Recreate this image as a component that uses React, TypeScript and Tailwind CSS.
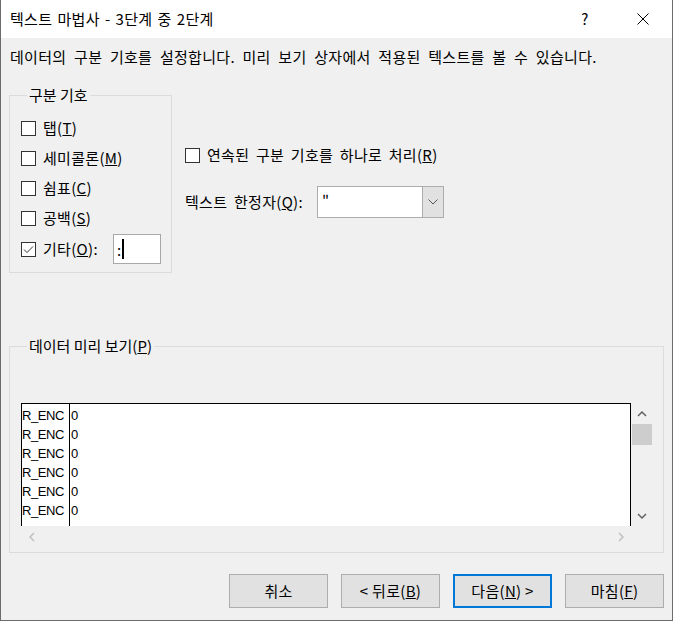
import React from "react";

function CheckBox({ checked = false }: { checked?: boolean }) {
  return (
    <span className="w-[15px] h-[15px] border border-[#333333] bg-white flex items-center justify-center shrink-0">
      {checked && (
        <svg width="13" height="13" viewBox="0 0 13 13">
          <path d="M2 6.5 L5 9.5 L11 3.5" fill="none" stroke="#333333" strokeWidth="1" />
        </svg>
      )}
    </span>
  );
}

function Label({ text, hot, tail = "" }: { text: string; hot: string; tail?: string }) {
  return (
    <span>
      {text}(<u>{hot}</u>){tail}
    </span>
  );
}

function Chevron({ dir, color }: { dir: "up" | "down" | "left" | "right"; color: string }) {
  const paths: Record<string, string> = {
    up: "M1 6 L5 2 L9 6",
    down: "M1 2 L5 6 L9 2",
    left: "M6 1 L2 5 L6 9",
    right: "M2 1 L6 5 L2 9",
  };
  const horiz = dir === "up" || dir === "down";
  return (
    <svg width={horiz ? 10 : 8} height={horiz ? 8 : 10} viewBox={horiz ? "0 0 10 8" : "0 0 8 10"}>
      <path d={paths[dir]} fill="none" stroke={color} strokeWidth="1.5" />
    </svg>
  );
}

const rows = ["R_ENC", "R_ENC", "R_ENC", "R_ENC", "R_ENC", "R_ENC"];

export default function App() {
  return (
    <div className="w-[673px] h-[621px] flex flex-col border-l border-r border-b border-[#6b6b6b] bg-[#f0f0f0] text-black text-[15px] tracking-[0.3px] [word-spacing:3px] font-['Noto_Sans_CJK_KR','Liberation_Sans',sans-serif]">
      {/* title bar */}
      <div className="h-[38px] bg-white flex items-center shrink-0">
        <span className="pl-[9px] [word-spacing:1.5px]">텍스트 마법사 - 3단계 중 2단계</span>
        <div className="ml-auto flex">
          <div className="w-[58px] h-[38px] flex items-center justify-center">?</div>
          <div className="w-[58px] h-[38px] flex items-center justify-center">
            <svg width="12" height="12" viewBox="0 0 12 12">
              <path d="M0.5 0.5 L11.5 11.5 M11.5 0.5 L0.5 11.5" stroke="#000" strokeWidth="1" />
            </svg>
          </div>
        </div>
      </div>

      <div className="flex flex-col pl-[8px] pr-[8px]">
        <p className="mt-[9px] pl-[1px] leading-[20px] [word-spacing:4px]">
          데이터의 구분 기호를 설정합니다. 미리 보기 상자에서 적용된 텍스트를 볼 수 있습니다.
        </p>

        <div className="flex mt-[18px]">
          <fieldset className="w-[163px] h-[188px] border border-[#dcdcdc] pl-[11px]">
            <legend className="ml-[6px] px-[2px] leading-[20px] tracking-normal [word-spacing:0px]">
              구분 기호
            </legend>
            <div className="flex flex-col pt-[8px]">
              <div className="h-[30px] flex items-center gap-[7px]">
                <CheckBox />
                <Label text="탭" hot="T" />
              </div>
              <div className="h-[30px] flex items-center gap-[7px]">
                <CheckBox />
                <Label text="세미콜론" hot="M" />
              </div>
              <div className="h-[30px] flex items-center gap-[7px]">
                <CheckBox />
                <Label text="쉼표" hot="C" />
              </div>
              <div className="h-[30px] flex items-center gap-[7px]">
                <CheckBox />
                <Label text="공백" hot="S" />
              </div>
              <div className="h-[32px] flex items-center gap-[7px]">
                <CheckBox checked />
                <span className="w-[63px]">
                  <Label text="기타" hot="O" tail=":" />
                </span>
                <div className="w-[48px] h-[30px] border border-[#a8a8a8] bg-white flex items-center pl-[3px]">
                  <span className="leading-none">:</span>
                  <span className="w-[2px] h-[20px] bg-black ml-[1px]" />
                </div>
              </div>
            </div>
          </fieldset>

          <div className="flex flex-col ml-[13px] pt-[60px]">
            <div className="h-[20px] flex items-center gap-[7px]">
              <CheckBox />
              <Label text="연속된 구분 기호를 하나로 처리" hot="R" />
            </div>
            <div className="flex items-center mt-[21px]">
              <span className="w-[132px]">
                <Label text="텍스트 한정자" hot="Q" tail=":" />
              </span>
              <div className="w-[127px] h-[32px] border border-[#adadad] bg-white flex">
                <div className="flex-1 pl-[4px] leading-[26px]">"</div>
                <div className="w-[21px] bg-[#e1e1e1] border-l border-[#adadad] flex items-center justify-center">
                  <svg width="10" height="6" viewBox="0 0 10 6">
                    <path d="M0.5 0.5 L5 5 L9.5 0.5" fill="none" stroke="#555" strokeWidth="1" />
                  </svg>
                </div>
              </div>
            </div>
          </div>
        </div>

        <fieldset className="mt-[63px] w-[655px] h-[217px] border border-[#dcdcdc] pl-[11px]">
          <legend className="ml-[6px] px-[2px] leading-[20px] tracking-normal [word-spacing:0px]">
            데이터 미리 보기(<u>P</u>)
          </legend>
          <div className="mt-[47px] grid grid-cols-[610px_22px] grid-rows-[123px_21px]">
            <div className="bg-white border-t border-l border-r border-black flex font-['Liberation_Sans',sans-serif] text-[13px] tracking-[-0.4px] [word-spacing:0px] leading-[19px]">
              <div className="w-[48px] border-r border-black flex flex-col pt-[2px]">
                {rows.map((r, i) => (
                  <span key={i}>{r}</span>
                ))}
              </div>
              <div className="flex flex-col pt-[2px] pl-[1px]">
                {rows.map((_, i) => (
                  <span key={i}>0</span>
                ))}
              </div>
            </div>
            <div className="flex flex-col">
              <div className="h-[21px] flex items-center justify-center">
                <Chevron dir="up" color="#606060" />
              </div>
              <div className="h-[21px] w-[20px] ml-[1px] bg-[#cdcdcd]" />
              <div className="flex-1" />
              <div className="h-[21px] flex items-center justify-center">
                <Chevron dir="down" color="#606060" />
              </div>
            </div>
            <div className="flex items-center justify-between">
              <div className="w-[21px] flex items-center justify-center">
                <Chevron dir="left" color="#c0c0c0" />
              </div>
              <div className="w-[21px] flex items-center justify-center">
                <Chevron dir="right" color="#c0c0c0" />
              </div>
            </div>
            <div />
          </div>
        </fieldset>

        <div className="flex justify-end gap-[13px] mt-[21px] [word-spacing:0px]">
          <button className="w-[99px] h-[34px] bg-[#e1e1e1] border border-[#adadad]">취소</button>
          <button className="w-[99px] h-[34px] bg-[#e1e1e1] border border-[#adadad]">
            &lt; 뒤로(<u>B</u>)
          </button>
          <button className="w-[99px] h-[34px] bg-[#e1e1e1] border-2 border-[#0078d7]">
            다음(<u>N</u>) &gt;
          </button>
          <button className="w-[99px] h-[34px] bg-[#e1e1e1] border border-[#adadad]">
            마침(<u>F</u>)
          </button>
        </div>
      </div>
    </div>
  );
}
